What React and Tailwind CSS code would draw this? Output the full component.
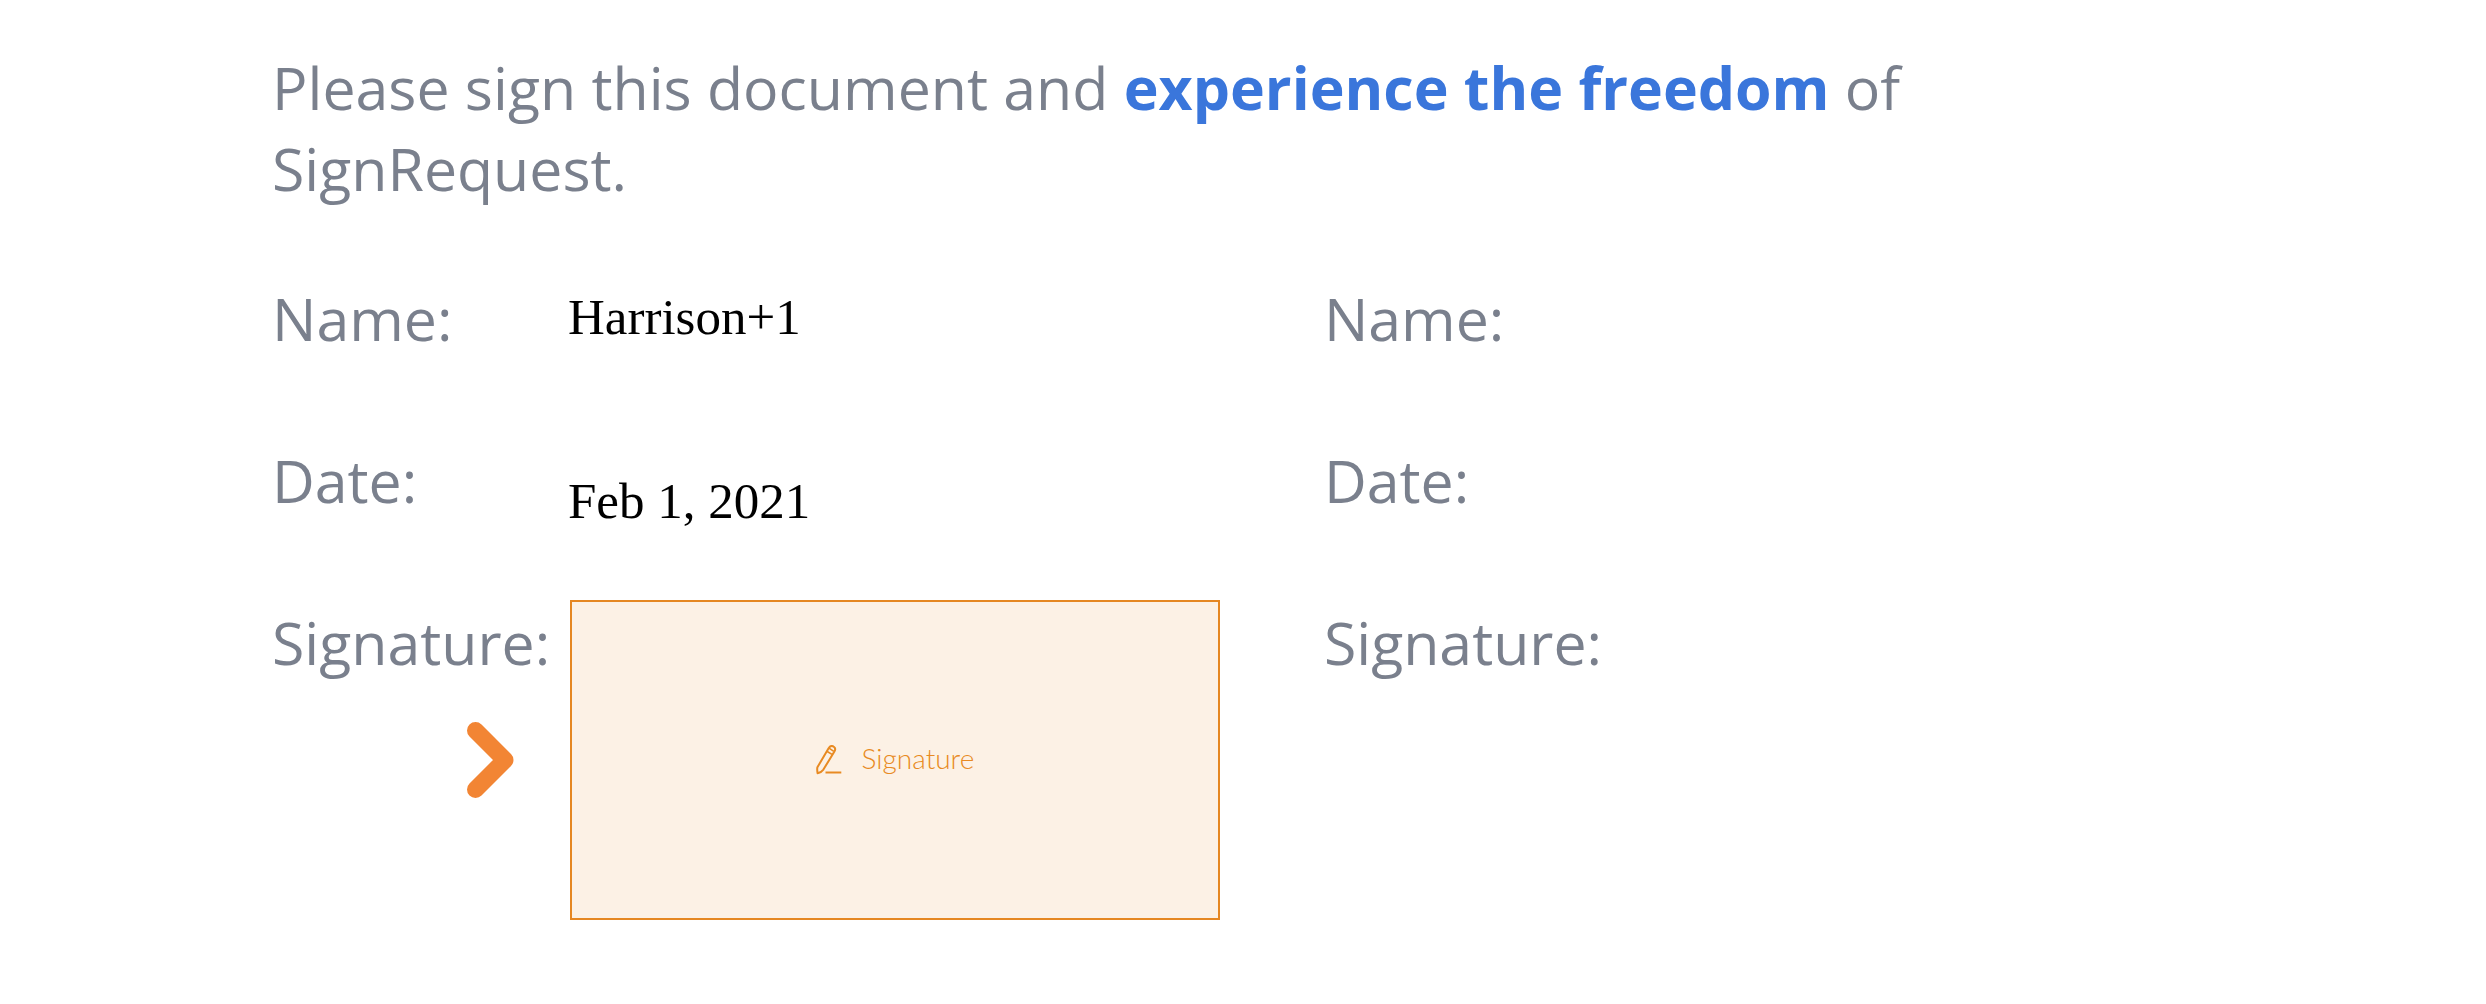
const intro = 'text-[59px] leading-[81px] text-[#7a808d]';
const label = 'text-[59px] leading-[84px] text-[#7a808d]';
const value = 'font-["Liberation_Serif",serif] text-[51px] leading-[82px] text-black';

function Label({ children }) {
  return <span className={label}>{children}</span>;
}

function ChevronIcon() {
  return (
    <svg className="h-[76px] w-[47px]" viewBox="0 0 47 76" fill="none" stroke="#f28534" strokeWidth="17" strokeLinecap="round" strokeLinejoin="round" aria-hidden="true">
      <path d="M8.5 8.5 38 38 8.5 67.5" />
    </svg>
  );
}

function PencilIcon() {
  return (
    <svg className="h-[30px] w-[26px]" viewBox="0 0 26 30" fill="none" stroke="#e88a22" strokeWidth="2" strokeLinejoin="round" aria-hidden="true">
      <path d="M1.4 22.3 12.6 3.2C14 1 16 .6 17.6 1.6 19.3 2.6 19.6 4.4 18.4 6.5L7.4 24.6C5.8 26.8 3.8 27.9 1.6 28.2 1.2 26 1 24 1.4 22.3Z" />
      <path d="M13 3.2 17.8 6.4M10.8 6.2 16 9.4" strokeWidth="1.6" />
      <path d="M9.5 27.5H25.3" />
    </svg>
  );
}

export default function App() {
  return (
    <main className='min-h-screen bg-white px-[272px] pt-[47px] font-["Open_Sans",sans-serif]'>
      <p className={intro}>
        Please sign this document and <strong className="font-bold text-[#3a76db]">experience the freedom</strong> of SignRequest.
      </p>
      <div className="mt-[67px] grid grid-cols-[13fr_11fr]">
        <section className="grid grid-rows-[162px_162px_auto]">
          <div className="flex items-start">
            <div className="w-[296px] shrink-0"><Label>Name:</Label></div>
            <span className={value}>Harrison+1</span>
          </div>
          <div className="flex items-start">
            <div className="w-[296px] shrink-0"><Label>Date:</Label></div>
            <span className={value + ' pt-[22px]'}>Feb 1, 2021</span>
          </div>
          <div className="flex items-start pr-[104px]">
            <div className="flex w-[298px] shrink-0 flex-col">
              <Label>Signature:</Label>
              <div className="mt-[38px] flex justify-end pr-14"><ChevronIcon /></div>
            </div>
            <button type="button" className='flex h-[320px] flex-1 items-center justify-center gap-5 border-2 border-[#e58722] bg-[#fcf1e5] font-["Lato",sans-serif] text-[28px] font-light text-[#e88a22]'>
              <PencilIcon />
              <span className="pb-1">Signature</span>
            </button>
          </div>
        </section>
        <section className="grid grid-rows-[162px_162px_auto]">
          <Label>Name:</Label>
          <Label>Date:</Label>
          <Label>Signature:</Label>
        </section>
      </div>
    </main>
  );
}
